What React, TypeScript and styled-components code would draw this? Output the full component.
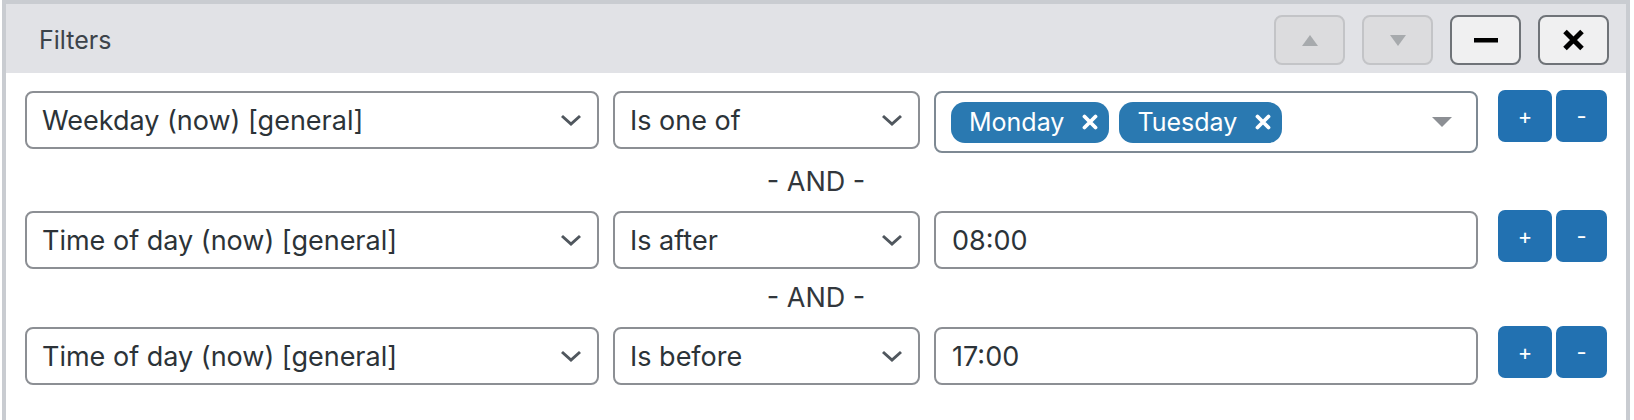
import React from 'react';
import styled, { createGlobalStyle } from 'styled-components';

const GlobalStyle = createGlobalStyle`
  body {
    margin: 0;
    background: #ffffff;
    font-family: Inter, 'Liberation Sans', sans-serif;
  }
`;

const Panel = styled.section`
  box-sizing: border-box;
  width: 1628px;
  height: 420px;
  margin-left: 2px;
  border: 4px solid #c9ccd1;
  border-bottom: none;
  overflow: hidden;
  background: #ffffff;
`;

const Header = styled.header`
  box-sizing: border-box;
  height: 69px;
  padding: 3px 17px 0 33px;
  display: flex;
  align-items: center;
  background: #e1e2e6;
`;

const Title = styled.h2`
  margin: 0;
  flex: 1;
  font-size: 25px;
  font-weight: 400;
  color: #3c434a;
`;

const HeaderActions = styled.div`
  display: flex;
  gap: 17px;
`;

const HeaderButton = styled.button<{ $disabled?: boolean }>`
  box-sizing: border-box;
  width: 71px;
  height: 50px;
  padding: 0;
  display: flex;
  align-items: center;
  justify-content: center;
  border-radius: 8px;
  border: 2px solid ${(p) => (p.$disabled ? '#c3c4c7' : '#6f7378')};
  background: ${(p) => (p.$disabled ? '#dcdcde' : '#f0f0f1')};
`;

const Body = styled.div`
  padding: 18px 19px 0;
`;

const Row = styled.div`
  display: flex;
  align-items: flex-start;
  gap: 14px;
`;

const SelectBox = styled.div<{ $width: number }>`
  box-sizing: border-box;
  width: ${(p) => p.$width}px;
  height: 58px;
  padding: 0 15px;
  display: flex;
  align-items: center;
  justify-content: space-between;
  border: 2px solid #8c8f94;
  border-radius: 8px;
  font-size: 27px;
  color: #2c3338;
`;

const TextInput = styled.div`
  box-sizing: border-box;
  width: 544px;
  height: 58px;
  padding: 0 16px;
  display: flex;
  align-items: center;
  border: 2px solid #8c8f94;
  border-radius: 8px;
  font-size: 27px;
  color: #2c3338;
`;

const MultiSelect = styled.div`
  box-sizing: border-box;
  width: 544px;
  height: 62px;
  padding: 0 24px 0 15px;
  display: flex;
  align-items: center;
  gap: 10px;
  border: 2px solid #7e8993;
  border-radius: 8px;
`;

const Tag = styled.span`
  box-sizing: border-box;
  height: 41px;
  padding: 0 11px 0 18px;
  display: flex;
  align-items: center;
  gap: 18px;
  border-radius: 14px;
  background: #2a79b1;
  color: #ffffff;
  font-size: 25px;
`;

const Spacer = styled.span`
  flex: 1;
`;

const RowActions = styled.div`
  display: flex;
  gap: 4px;
  margin: -1px 0 0 6px;
`;

const BlueButton = styled.button<{ $width: number }>`
  box-sizing: border-box;
  width: ${(p) => p.$width}px;
  height: 52px;
  padding: 0;
  border: none;
  border-radius: 7px;
  background: #2271b1;
  color: #ffffff;
  font-family: Inter, 'Liberation Sans', sans-serif;
  font-size: 22px;
`;

const Separator = styled.div`
  height: 58px;
  line-height: 58px;
  text-align: center;
  font-size: 27px;
  color: #32373c;
`;

const Chevron = () => (
  <svg width="22" height="12" viewBox="0 0 22 12">
    <path d="M2 2 L11 10 L20 2" fill="none" stroke="#50575e" strokeWidth="3" />
  </svg>
);

const TagClose = () => (
  <svg width="16" height="16" viewBox="0 0 16 16">
    <path d="M2.5 2.5 L13.5 13.5 M13.5 2.5 L2.5 13.5" stroke="#ffffff" strokeWidth="3.8" strokeLinecap="round" />
  </svg>
);

type Condition = {
  field: string;
  op: string;
  value?: string;
  tags?: string[];
};

const conditions: Condition[] = [
  { field: 'Weekday (now) [general]', op: 'Is one of', tags: ['Monday', 'Tuesday'] },
  { field: 'Time of day (now) [general]', op: 'Is after', value: '08:00' },
  { field: 'Time of day (now) [general]', op: 'Is before', value: '17:00' },
];

export default function App(): React.ReactElement {
  return (
    <>
      <GlobalStyle />
      <Panel>
        <Header>
          <Title>Filters</Title>
          <HeaderActions>
            <HeaderButton $disabled>
              <svg width="16" height="11" viewBox="0 0 16 11">
                <polygon points="8,0 16,11 0,11" fill="#a7aaad" />
              </svg>
            </HeaderButton>
            <HeaderButton $disabled>
              <svg width="16" height="11" viewBox="0 0 16 11">
                <polygon points="0,0 16,0 8,11" fill="#a7aaad" />
              </svg>
            </HeaderButton>
            <HeaderButton>
              <svg width="24" height="5" viewBox="0 0 24 5">
                <rect width="24" height="4.5" fill="#000000" />
              </svg>
            </HeaderButton>
            <HeaderButton>
              <svg width="23" height="22" viewBox="0 0 23 22">
                <path d="M3 2.5 L20 19.5 M20 2.5 L3 19.5" stroke="#000000" strokeWidth="5" />
              </svg>
            </HeaderButton>
          </HeaderActions>
        </Header>
        <Body>
          {conditions.map((c, i) => (
            <React.Fragment key={i}>
              {i > 0 && <Separator>- AND -</Separator>}
              <Row>
                <SelectBox $width={574}>
                  <span>{c.field}</span>
                  <Chevron />
                </SelectBox>
                <SelectBox $width={307}>
                  <span>{c.op}</span>
                  <Chevron />
                </SelectBox>
                {c.tags ? (
                  <MultiSelect>
                    {c.tags.map((t) => (
                      <Tag key={t}>
                        {t}
                        <TagClose />
                      </Tag>
                    ))}
                    <Spacer />
                    <svg width="20" height="10" viewBox="0 0 20 10">
                      <polygon points="0,0 20,0 10,10" fill="#8c8f94" />
                    </svg>
                  </MultiSelect>
                ) : (
                  <TextInput>{c.value}</TextInput>
                )}
                <RowActions>
                  <BlueButton $width={54}>+</BlueButton>
                  <BlueButton $width={51}>-</BlueButton>
                </RowActions>
              </Row>
            </React.Fragment>
          ))}
        </Body>
      </Panel>
    </>
  );
}
